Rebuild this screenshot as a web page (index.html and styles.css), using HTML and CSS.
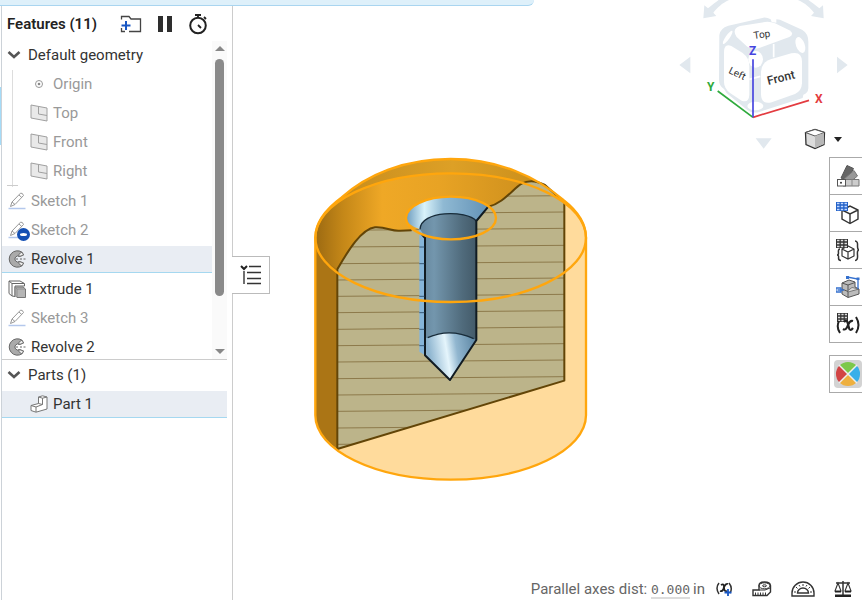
FILE: index.html
```html
<!DOCTYPE html>
<html lang="en">

<head>
    <meta charset="UTF-8">
    <meta name="viewport" content="width=device-width, initial-scale=1.0">
    <title>Part Studio</title>
    <link rel="stylesheet" href="styles.css">
</head>

<body>

    <!-- shared icons -->
    <svg class="defs" width="0" height="0" aria-hidden="true">
        <symbol id="chevron" viewBox="0 0 14 10">
            <path d="M1.500 2L7 7L12.500 2" fill="none" stroke="#555" stroke-width="2.600" />
        </symbol>
        <symbol id="plane" viewBox="0 0 18 18">
            <path d="M1 1L17 4V17L1 14Z" fill="#e9e9e9" stroke="#a0a0a0" />
            <path d="M8.500 2.500V10L17 11.500" fill="none" stroke="#a0a0a0" />
        </symbol>
        <symbol id="sketch" viewBox="0 0 18 18">
            <path d="M0.500 16.500H17.500" stroke="#b4c8ec" stroke-width="1.500" />
            <path d="M2.500 14.500L4 10L12.500 1.200Q14.500 0.500 15.500 3.500L7 12.500ZM4 10L7 12.500M11 3L13.800 5.500" fill="#fff" stroke="#999" />
        </symbol>
        <symbol id="revolve" viewBox="0 0 18 18">
            <path d="M14 2.200A8.200 8.200 0 1 0 14 15.800L15.500 13L11.500 11.500A3 3 0 1 1 11.500 6.500L15.500 5Z" fill="#aaa" stroke="#666" />
            <path d="M11 6.500L11 4L14 2.200L15.500 5ZM11 11.500L11 14L14 15.800L15.500 13Z" fill="#eee" stroke="#666" stroke-width=".8" />
            <path d="M7.500 9H10M12 9H14M15.500 9H17.500" stroke="#666" />
        </symbol>
        <symbol id="extrude" viewBox="0 0 18 18">
            <path d="M1 1H12L16.500 3.500V6H7V16.500L4 16L1 13.500Z" fill="#fff" stroke="#666" />
            <path d="M1 1L4 3.500V16M4 3.500H16" fill="none" stroke="#666" />
            <path d="M7 7H15L17.500 9V17.500H9L7 15.500Z" fill="#b5b5b5" stroke="#777" />
            <path d="M7 7L9 9V17M9 9H17" fill="none" stroke="#888" stroke-width=".8" />
        </symbol>
        <symbol id="part" viewBox="0 0 18 18">
            <path d="M8.500 2L12.500 0.800L17 2V14L6 17.200L1 15.500V10.500L8.500 8.500Z" fill="#fff" stroke="#777" />
            <path d="M8.500 2L12.500 3.200L17 2M12.500 3.200V9.500L6 12L1 10.500M6 12V17M8.500 8.500L12.500 9.500" fill="none" stroke="#777" />
        </symbol>
    </svg>

    <div class="notice"></div>

    <div class="workspace">

        <aside class="sidebar">
            <header class="sidebar-header">
                <h1 class="title">Features (11)</h1>
                <button class="icon-btn" aria-label="Add folder">
                    <svg width="22" height="18" viewBox="0 0 22 18">
                        <path d="M1.500 4.500V1.500H9L11 4H20.500V16.500H9M1.500 13V16.500H5" fill="none" stroke="#444" stroke-width="1.300" />
                        <path d="M6 6V15M1.500 10.500H10.500" stroke="#1857c4" stroke-width="2" />
                    </svg>
                </button>
                <button class="icon-btn" aria-label="Pause">
                    <svg width="16" height="18" viewBox="0 0 16 18">
                        <path d="M1 1H6V17H1ZM10 1H15V17H10Z" fill="#2e2e2e" />
                    </svg>
                </button>
                <button class="icon-btn" aria-label="Regeneration times">
                    <svg width="20" height="22" viewBox="0 0 20 22">
                        <circle cx="10" cy="12.500" r="7.800" fill="none" stroke="#222" stroke-width="2" />
                        <path d="M7 2H13M10 2V5M16 4L18 6M10 12L13 15" fill="none" stroke="#222" stroke-width="1.800" />
                    </svg>
                </button>
            </header>

            <div class="features">
                <ul class="feature-list">
                    <li class="row group"><svg class="chevron"><use href="#chevron" /></svg>Default geometry</li>
                    <li>
                        <ul class="children">
                            <li class="row muted">
                                <svg class="icon" viewBox="0 0 18 18">
                                    <circle cx="9" cy="9" r="3.500" fill="none" stroke="#999" />
                                    <circle cx="9" cy="9" r="1.300" fill="#888" />
                                </svg>Origin
                            </li>
                            <li class="row muted"><svg class="icon"><use href="#plane" /></svg>Top</li>
                            <li class="row muted"><svg class="icon"><use href="#plane" /></svg>Front</li>
                            <li class="row muted"><svg class="icon"><use href="#plane" /></svg>Right</li>
                        </ul>
                    </li>
                    <li class="row muted"><svg class="icon"><use href="#sketch" /></svg>Sketch 1</li>
                    <li class="row muted"><svg class="icon"><use href="#sketch" /></svg><span class="badge"></span>Sketch 2</li>
                    <li class="row selected"><svg class="icon"><use href="#revolve" /></svg>Revolve 1</li>
                    <li class="row"><svg class="icon"><use href="#extrude" /></svg>Extrude 1</li>
                    <li class="row muted"><svg class="icon"><use href="#sketch" /></svg>Sketch 3</li>
                    <li class="row"><svg class="icon"><use href="#revolve" /></svg>Revolve 2</li>
                </ul>
                <div class="scrollbar">
                    <span class="arrow-up"></span>
                    <span class="thumb"></span>
                    <span class="arrow-down"></span>
                </div>
            </div>

            <ul class="parts">
                <li class="row group"><svg class="chevron"><use href="#chevron" /></svg>Parts (1)</li>
                <li class="row part selected"><svg class="icon"><use href="#part" /></svg>Part 1</li>
            </ul>
        </aside>

        <main class="canvas">

            <button class="list-toggle" aria-label="Toggle feature list">
                <svg width="22" height="22" viewBox="0 0 22 22">
                    <path d="M1 2L4 5L7 2" fill="none" stroke="#222" stroke-width="2" />
                    <path d="M4 7V20M9 2.500H21M7 8.500H21M7 14.500H21M7 19.500H21" fill="none" stroke="#333" stroke-width="1.400" />
                </svg>
            </button>

            <svg class="model" viewBox="0 0 900 1050" role="img" aria-label="Section view of part">
                <defs>
                    <linearGradient id="gold" x1="0" x2="1">
                        <stop offset="0" stop-color="#9c6a12" />
                        <stop offset=".11" stop-color="#c48718" />
                        <stop offset=".27" stop-color="#efa826" />
                        <stop offset=".5" stop-color="#e8a324" />
                        <stop offset="1" stop-color="#c4891b" />
                    </linearGradient>
                    <linearGradient id="rim" x1="0" x2="1">
                        <stop offset="0" stop-color="#c88d1e" />
                        <stop offset=".5" stop-color="#dda026" />
                        <stop offset="1" stop-color="#c68a18" />
                    </linearGradient>
                    <linearGradient id="sink" x1="0" x2="1">
                        <stop offset="0" stop-color="#6d9cbe" />
                        <stop offset=".22" stop-color="#d9f3fb" />
                        <stop offset=".45" stop-color="#8fb9d3" />
                        <stop offset="1" stop-color="#6392b6" />
                    </linearGradient>
                    <linearGradient id="bore" x1="0" x2="1">
                        <stop offset="0" stop-color="#64859c" />
                        <stop offset=".25" stop-color="#7396ad" />
                        <stop offset=".75" stop-color="#506b7c" />
                        <stop offset="1" stop-color="#435a69" />
                    </linearGradient>
                    <linearGradient id="tip" x1="0" y1="0" x2="1" y2="-.15">
                        <stop offset="0" stop-color="#8db4cf" />
                        <stop offset=".35" stop-color="#e5f5fc" />
                        <stop offset=".55" stop-color="#91b6cf" />
                        <stop offset="1" stop-color="#557f9d" />
                    </linearGradient>
                    <clipPath id="face">
                        <path d="M112 388C145 330 185 267 225 262C260 260 275 275 300 272C320 272 345 271 360 264L530 243L565 200C610 190 640 145 665 131Q695 115 735 135L793 190V722L112 927Z" />
                    </clipPath>
                </defs>

                <!-- outer body -->
                <path d="M46 293C46 245 80 205 125 172C200 105 310 57 452 57S710 110 790 180C835 215 858 250 858 293V826C858 930 680 1019 452 1019S46 930 46 826Z" fill="#ffdb9c" />
                <path d="M46 293H112V927C70 900 46 860 46 826Z" fill="#ab7515" />
                <path d="M112 388C75 365 46 330 46 293C46 245 80 205 125 172C200 105 310 57 452 57S710 110 790 180L735 280L300 290L225 270Z" fill="url(#gold)" />
                <path d="M125 172C200 105 310 57 452 57S710 110 790 180C690 115 560 101 452 101S220 120 125 172Z" fill="url(#rim)" />

                <!-- cut face and hatching -->
                <g clip-path="url(#face)">
                    <rect x="100" y="100" width="700" height="850" fill="#bcb48a" />
                    <path d="M112 173L793 167M112 222L793 216M112 271L793 265M112 321L793 316M112 371L793 366M112 420L793 414M112 469L793 463M112 518L793 512M112 568L793 561M112 617L793 611M112 666L793 660M112 716L793 710M112 765L793 759M112 814L793 808M112 864L793 858M112 913L793 907" stroke="#8d7a4b" stroke-width="3" />
                </g>
                <path d="M112 388C145 330 185 267 225 262C260 260 275 275 300 272L335 271M565 200C610 190 640 145 665 131Q695 115 735 135L776 172M793 190V722L112 927V388" fill="none" stroke="#634507" stroke-width="6" stroke-linejoin="round" />

                <!-- hole -->
                <path d="M319 234C319 199 379 170 453 170C500 170 542 182 565 200L528 243Q450 205 360 268Q320 255 319 234Z" fill="url(#sink)" />
                <path d="M358 266L375 280V646L358 635Z" fill="#86b5d9" />
                <path d="M360 268C362 210 500 210 529 243V600L450 720L375 646V290Z" fill="url(#bore)" />
                <path d="M377 595Q450 560 529 600L450 720L377 646Z" fill="url(#tip)" />
                <path d="M360 268C362 210 500 210 529 243M383 593Q450 563 521 596" fill="none" stroke="#182c3a" stroke-width="4" />
                <path d="M366 284L375 294V646L450 720L529 600V243L563 202" fill="none" stroke="#111b22" stroke-width="6" stroke-linejoin="round" />
                <path d="M358 321H373M358 371H373M358 420H373M358 469H373M358 518H373M358 568H373M358 617H373" stroke="#385b78" stroke-width="3" />

                <!-- highlighted edges -->
                <g fill="none" stroke="#ffa60d" stroke-width="7">
                    <path d="M46 293C46 245 80 205 125 172C200 105 310 57 452 57S710 110 790 180C835 215 858 250 858 293V826C858 930 680 1019 452 1019S46 930 46 826Z" />
                    <ellipse cx="452" cy="293" rx="406" ry="193" />
                    <ellipse cx="453" cy="234" rx="135" ry="64" />
                </g>
            </svg>

            <svg class="view-cube" viewBox="0 0 576 480" role="img" aria-label="View cube">
                <g fill="#e1e8ee">
                    <path d="M28 195L61 170V220ZM533 195L501 170V220ZM257 415H305L281 446Z" />
                    <path d="M100 55L103 16L114 25C145 0 155 -8 180 -20L190 -5C160 5 145 20 130 38L139 48ZM461 55L459 16L448 25C417 0 405 -8 380 -20L370 -5C402 5 417 20 432 38L423 48Z" />
                    <path d="M148 105Q150 85 175 77L280 53Q292 52 302 58L305 66L319 68V58L330 59L396 89Q415 100 415 125V265Q414 280 400 284L398 294L270 335Q248 342 232 330L170 280L162 267Q147 258 147 240Z" />
                </g>
                <g fill="#fff">
                    <path d="M210 78L285 66Q300 64 315 70L358 91Q375 101 358 111L270 143Q250 150 232 140L200 111Q184 87 210 78Z" />
                    <path d="M184 138L218 159Q238 174 238 198V285Q236 310 215 302L180 279Q162 264 162 245V155Q163 129 184 138Z" />
                    <path d="M302 178L364 160Q396 153 396 185V250Q395 273 375 282L305 307Q274 315 273 283V215Q275 187 302 178Z" />
                    <ellipse cx="257" cy="178" rx="22" ry="25" />
                    <ellipse cx="391" cy="135" rx="13" ry="25" transform="rotate(-20 391 135)" />
                    <ellipse cx="173" cy="112" rx="6" ry="24" transform="rotate(35 173 112)" />
                    <ellipse cx="256" cy="318" rx="24" ry="13" />
                </g>
                <path d="M311 132V172M238 238L271 229" stroke="#fff" stroke-width="5" />
                <path d="M249 352L143 273" stroke="#2eaa3c" stroke-width="5" />
                <path d="M249 352L417 301" stroke="#e33b40" stroke-width="5" />
                <path d="M249 352V178" stroke="#4544df" stroke-width="5" />
                <text class="face-label" x="252" y="117" transform="rotate(-8 252 117)">Top</text>
                <text class="face-label" x="174" y="218" transform="rotate(26 174 218)">Left</text>
                <text class="face-label front" x="295" y="255" transform="rotate(-14 295 255)">Front</text>
                <text class="axis z" x="237" y="164">Z</text>
                <text class="axis y" x="111" y="273">Y</text>
                <text class="axis x" x="435" y="308">X</text>
            </svg>

            <button class="view-menu" aria-label="View options">
                <svg width="22" height="22" viewBox="0 0 22 22">
                    <path d="M1.500 4.500L11 1.500L20.500 4.500L20 16.500L11 20.500L2 16.500Z" fill="#dcdcdc" stroke="#333" stroke-width="1.300" />
                    <path d="M1.500 4.500L11 1.500L20.500 4.500L11 8Z" fill="#fff" stroke="#555" />
                    <path d="M11 8L20 5V16L11 20Z" fill="#b8b8b8" />
                </svg>
                <span class="caret"></span>
            </button>

            <nav class="tools">
                <button class="tool" aria-label="Appearances">
                    <svg width="24" height="24" viewBox="0 0 24 24">
                        <path d="M5 14L11 1.500L17.500 4.500L11 17Z" fill="#666" stroke="#555" />
                        <path d="M8 15L18 6.500L21.500 12L13 19Z" fill="#999" stroke="#777" />
                        <path d="M7 15.500H23V22H7Z" fill="#ccc" stroke="#777" />
                        <path d="M16 15.500V22" stroke="#888" />
                        <rect x="1.500" y="15.500" width="8" height="6.500" fill="#fff" stroke="#555" />
                        <circle cx="5" cy="18.700" r="1" fill="#333" />
                    </svg>
                </button>
                <button class="tool" aria-label="Part table">
                    <svg width="24" height="24" viewBox="0 0 24 24">
                        <path d="M6 9L14 5L22 9V18L14 22.500L6 18ZM6 9L14 13L22 9M14 13V22" fill="#fff" stroke="#333" stroke-width="1.400" />
                        <path d="M0 1H12V10H0Z" fill="#2362c8" />
                        <path d="M1 2.500H3.500M4.800 2.500H7.200M8.500 2.500H11M1 5.500H3.500M4.800 5.500H7.200M8.500 5.500H11M1 8.500H3.500M4.800 8.500H7.200M8.500 8.500H11" stroke="#c3d8ff" stroke-width="1.600" />
                    </svg>
                </button>
                <button class="tool" aria-label="Configurations">
                    <svg width="24" height="24" viewBox="0 0 24 24">
                        <path d="M6 11L12 8L18 11V18L12 21L6 18ZM6 11L12 14L18 11M12 14V21" fill="#fff" stroke="#333" stroke-width="1.200" />
                        <path d="M0 1H12V10H0Z" fill="#333" />
                        <path d="M1 2.500H3.500M4.800 2.500H7.200M8.500 2.500H11M1 5.500H3.500M4.800 5.500H7.200M8.500 5.500H11M1 8.500H3.500M4.800 8.500H7.200M8.500 8.500H11" stroke="#ddd" stroke-width="1.600" />
                        <path d="M4 11Q2 11 2.500 15Q2.500 17 1 17Q3 17 2.500 20Q2.500 22.500 5 22.500M19 3Q22 3 21.500 8Q21.500 12 23 12Q21 12 21.500 17Q22 22.500 19 22.500" fill="none" stroke="#333" stroke-width="1.500" />
                    </svg>
                </button>
                <button class="tool" aria-label="Measurements">
                    <svg width="24" height="24" viewBox="0 0 24 24">
                        <path d="M6 8L13 5L19 7V12L23 14V19L12 22.500L6 19Z" fill="#bbb" stroke="#555" />
                        <path d="M6 8L12 10L19 7.500M12 10V15.500L23 14M12 15.500V22M6 14L12 16.500" fill="none" stroke="#555" />
                        <path d="M12 15.500L16 12.500L23 14L12 17Z" fill="#ddd" stroke="#666" stroke-width=".8" />
                        <path d="M11 2L22 4V14M0 13H5V17H0ZM1.500 15H8" fill="none" stroke="#3470ce" stroke-width="1.300" />
                        <path d="M10 1H13V4H10ZM20.500 2.500H23.500V5H20.500Z" fill="#3470ce" />
                    </svg>
                </button>
                <button class="tool" aria-label="Variables">
                    <svg width="24" height="24" viewBox="0 0 24 24">
                        <path d="M1 1H12V10H1Z" fill="#333" />
                        <path d="M2 2.500H4.200M5.400 2.500H7.600M8.800 2.500H11M2 5.500H4.200M5.400 5.500H7.600M8.800 5.500H11M2 8.500H4.200M5.400 8.500H7.600M8.800 8.500H11" stroke="#ddd" stroke-width="1.600" />
                        <path d="M3 9Q0 15 4 21M20 5Q25 13 20 21" fill="none" stroke="#222" stroke-width="2" />
                        <path d="M8 10Q11 7 12 12L13 16Q14 20 17 16M17 9Q14 8 12 13Q10 19 7 17" fill="none" stroke="#222" stroke-width="2.200" />
                    </svg>
                </button>
                <button class="tool separate" aria-label="Render">
                    <svg width="28" height="28" viewBox="0 0 28 28">
                        <rect width="28" height="28" rx="4" fill="#d3d3d3" />
                        <path d="M14 14L5.500 5.500A12 12 0 0 1 22.500 5.500Z" fill="#7cc84a" />
                        <path d="M14 14L22.500 5.500A12 12 0 0 1 22.500 22.500Z" fill="#38afe9" />
                        <path d="M14 14L22.500 22.500A12 12 0 0 1 5.500 22.500Z" fill="#eeb03f" />
                        <path d="M14 14L5.500 22.500A12 12 0 0 1 5.500 5.500Z" fill="#d24444" />
                        <path d="M5 5L23 23M23 5L5 23" stroke="#eee" stroke-width="1.500" />
                    </svg>
                </button>
            </nav>

            <footer class="status">
                <span class="measure">Parallel axes dist: <span class="value">0.000</span><span class="unit">in</span></span>
                <button class="icon-btn" aria-label="Add variable">
                    <svg width="18" height="16" viewBox="0 0 18 16">
                        <path d="M4 2Q0 7 4 13M14 2Q18 7 15 12" fill="none" stroke="#333" stroke-width="1.500" />
                        <path d="M6 4Q9 2 9 6Q9 11 12 10M13 3Q11 2 9 6Q8 11 5 10" fill="none" stroke="#222" stroke-width="1.800" />
                        <path d="M13 8V15M9.500 11.500H16.500" stroke="#1857c4" stroke-width="1.800" />
                    </svg>
                </button>
                <button class="icon-btn" aria-label="Measure">
                    <svg width="20" height="16" viewBox="0 0 20 16">
                        <path d="M1 9H7V4.500Q7 1 12.500 1T18.500 4.500V11L15 14.500H1Z" fill="#fff" stroke="#333" stroke-width="1.400" />
                        <ellipse cx="12.500" cy="4.800" rx="5.500" ry="3" fill="none" stroke="#333" />
                        <ellipse cx="12.500" cy="4.800" rx="2" ry="1" fill="none" stroke="#333" />
                        <path d="M7 9H13L18 7M3.500 11.500V14M6 11.500V14M8.500 11.500V14M11 11.500V14M13.500 11.500V14" fill="none" stroke="#333" />
                    </svg>
                </button>
                <button class="icon-btn" aria-label="Angle">
                    <svg width="24" height="16" viewBox="0 0 24 16">
                        <path d="M1 15V12A11 11 0 0 1 23 12V15Z" fill="#fff" stroke="#333" stroke-width="1.400" />
                        <path d="M6.500 12A5.500 5 0 0 1 17.500 12Z" fill="none" stroke="#333" stroke-width="1.400" />
                        <path d="M3 11H5M5 6L6.500 7.500M12 3V5M19 6L17.500 7.500M21 11H19M8 4L9 5.500M16 4L15 5.500" stroke="#333" />
                    </svg>
                </button>
                <button class="icon-btn" aria-label="Mass properties">
                    <svg width="18" height="18" viewBox="0 0 18 18">
                        <path d="M9 1V15M2 3H16" stroke="#333" stroke-width="1.500" />
                        <path d="M4 3L1 11H7ZM14 3L11 11H17Z" fill="none" stroke="#333" stroke-width="1.100" />
                        <path d="M1 11H7V12.500H1ZM11 11H17V12.500H11ZM1 14.500H17V17H1Z" fill="#222" />
                    </svg>
                </button>
            </footer>

        </main>
    </div>

</body>

</html>
```
FILE: styles.css
```css
* {
    box-sizing: border-box;
}

body {
    margin: 0;
    color: #333;
    font-family: Roboto, "Liberation Sans", sans-serif;
    font-size: 15px;
    background: #fff;
}

ul {
    margin: 0;
    padding: 0;
    list-style: none;
}

button {
    padding: 0;
    border: 0;
    background: none;
    cursor: pointer;
}

svg {
    display: block;
    flex: none;
}

.defs {
    position: absolute;
}

.notice {
    position: absolute;
    top: 0;
    left: 0;
    width: 62%;
    height: 6px;
    background: #def0fa;
    border-bottom: 1px solid #a9d5f0;
    border-bottom-right-radius: 6px;
}

/* edge of the active tab, left of the sidebar */
.workspace::before {
    content: "";
    width: 1px;
    height: 58px;
    margin-top: 87px;
    background: #a5dbf7;
}

.workspace {
    display: flex;
    height: 100vh;
    overflow: hidden;
}

/* Sidebar */

.sidebar {
    width: 232px;
    flex: none;
    padding: 6px 5px 0 0;
    border-left: 1px solid #ccd2d8;
    border-right: 1px solid #ccc;
}

.sidebar-header {
    display: flex;
    align-items: center;
    height: 35px;
    padding-left: 5px;
    gap: 15px;
}

.title {
    margin: 0 8px 0 0;
    font-size: 15px;
    font-weight: 600;
    color: #222;
}

.icon-btn {
    flex: none;
}

.features {
    display: flex;
    border-bottom: 1px solid #ccc;
}

.feature-list {
    flex: 1;
    height: 318px;
    overflow: hidden;
}

.row {
    position: relative;
    display: flex;
    align-items: center;
    gap: 5px;
    height: 27px;
    margin-bottom: 2px;
    padding-left: 6px;
}

.row.group {
    gap: 7px;
    padding-left: 5px;
}

.row.muted {
    color: #999;
}

.row.selected {
    margin-top: 3px;
    background: #e9edf3;
    border-bottom: 1px solid #a5d8f0;
}

.icon {
    width: 18px;
    height: 18px;
}

.chevron {
    width: 14px;
    height: 10px;
}

.children {
    margin-left: 10px;
    padding-bottom: 1px;
    border-left: 1px solid #ddd;
}

/* foot of the tree line */
.children::after {
    content: "";
    display: block;
    width: 11px;
    height: 1px;
    margin: -1px 0 0 -6px;
    background: #ccc;
}

.children .row {
    padding-left: 17px;
}

.badge {
    position: absolute;
    left: 15px;
    top: 12px;
    width: 13px;
    height: 13px;
    border: solid #1450b4;
    border-width: 5px 3px;
    border-radius: 50%;
    background: #fff;
}

.scrollbar {
    display: flex;
    flex-direction: column;
    align-items: center;
    width: 15px;
    padding: 5px 0;
    background: #fafafa;
}

.thumb {
    width: 9px;
    height: 237px;
    margin: 8px 0 auto;
    border-radius: 5px;
    background: #8a8a8a;
}

.arrow-up,
.arrow-down {
    border: 5px solid transparent;
}

.arrow-up {
    border-top: 0;
    border-bottom-color: #888;
}

.arrow-down {
    border-bottom: 0;
    border-top-color: #888;
}

.parts {
    padding-top: 1px;
}

.row.part {
    padding-left: 28px;
}

/* Canvas */

.canvas {
    position: relative;
    flex: 1;
    min-width: 0;
}

.list-toggle {
    position: absolute;
    left: -1px;
    top: 256px;
    width: 38px;
    height: 38px;
    padding-left: 8px;
    border: 1px solid #bbb;
    border-left: 0;
    background: #fff;
}

.model {
    position: absolute;
    left: 67px;
    top: 140px;
    width: 300px;
    height: 350px;
}

.view-cube {
    position: absolute;
    right: 0;
    top: 0;
    width: 192px;
    height: 160px;
}

.face-label {
    font-size: 30px;
    fill: #333;
}

.face-label.front {
    font-size: 36px;
    font-weight: 500;
}

.axis {
    font-size: 36px;
    font-weight: 700;
}

.axis.x {
    fill: #e33b40;
}

.axis.y {
    fill: #2eaa3c;
}

.axis.z {
    fill: #4544df;
}

.view-menu {
    position: absolute;
    right: 20px;
    top: 128px;
    display: flex;
    align-items: center;
    gap: 8px;
}

.caret {
    border: 4px solid transparent;
    border-top: 5px solid #222;
    border-bottom: 0;
}

.tools {
    position: absolute;
    right: 0;
    top: 157px;
    width: 33px;
}

.tool {
    display: flex;
    align-items: center;
    width: 100%;
    height: 38px;
    margin-bottom: -1px;
    padding-left: 6px;
    border: 1px solid #aaa;
    border-right: 0;
    background: #fff;
    overflow: hidden;
}

.tool.separate {
    margin-top: 13px;
    padding-left: 4px;
}

.status {
    position: absolute;
    right: 10px;
    bottom: 0;
    display: flex;
    align-items: center;
    gap: 19px;
    height: 22px;
    color: #666;
}

.measure {
    margin-right: -9px;
    white-space: nowrap;
}

.value {
    font-family: "DejaVu Sans Mono", monospace;
    font-size: 13px;
    border-bottom: 2px solid #ddd;
}

.unit {
    margin-left: 3px;
}
```
